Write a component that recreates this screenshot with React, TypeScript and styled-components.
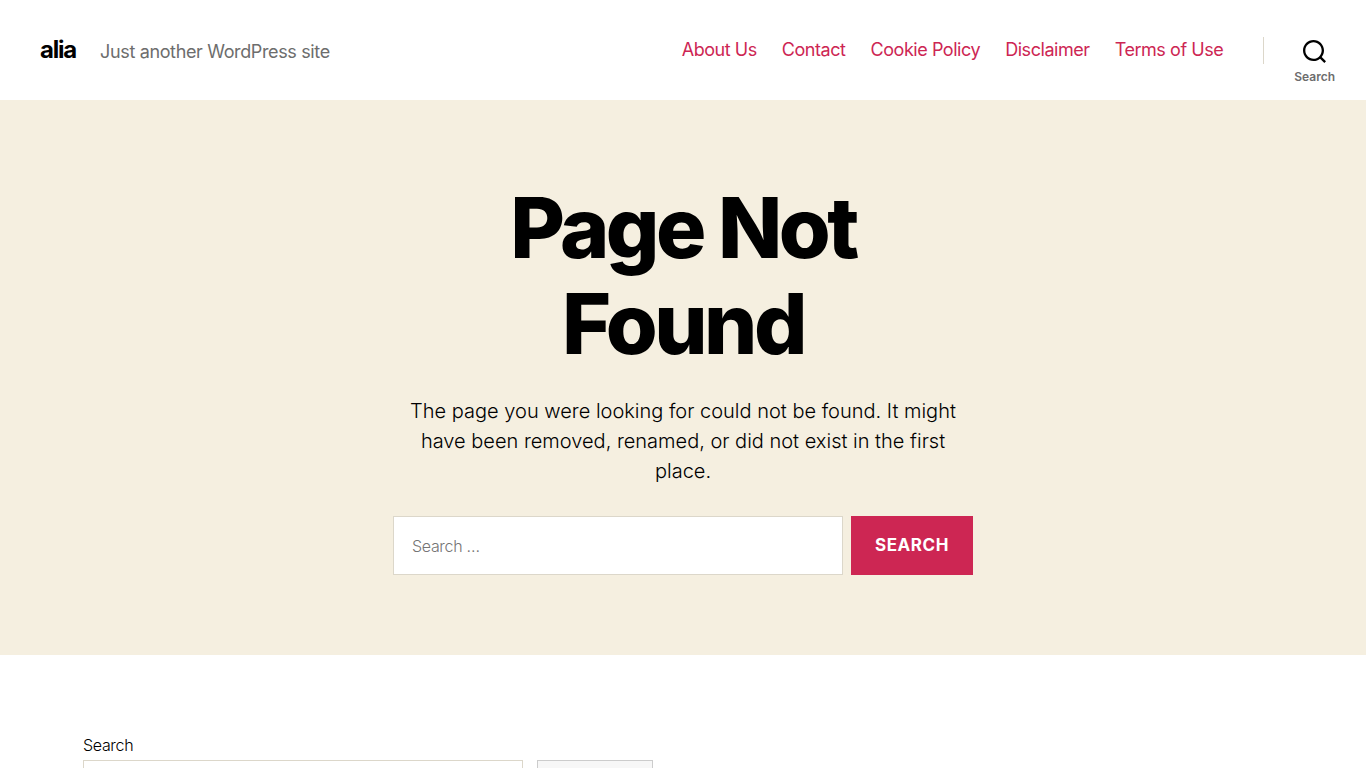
import React from "react";
import styled, { createGlobalStyle } from "styled-components";

const GlobalStyle = createGlobalStyle`
  *, *::before, *::after { box-sizing: border-box; }
  body {
    margin: 0;
    background: #fff;
    color: #000;
    font-family: Inter, "Liberation Sans", sans-serif;
    font-size: 18px;
    letter-spacing: -0.015em;
  }
`;

const Header = styled.header`
  display: flex;
  align-items: stretch;
  justify-content: space-between;
  min-height: 100px;
  background: #fff;
`;

const Branding = styled.div`
  display: flex;
  align-items: baseline;
  gap: 24px;
  padding: 36px 0 0 40px;
`;

const SiteTitle = styled.a`
  color: #000;
  font-size: 24px;
  font-weight: 700;
  line-height: 28px;
  letter-spacing: -0.05em;
  text-decoration: none;
`;

const Tagline = styled.p`
  margin: 0;
  color: #6d6d6d;
  font-size: 18px;
  font-weight: 400;
  line-height: 28px;
  letter-spacing: -0.02em;
`;

const HeaderRight = styled.div`
  display: flex;
  align-items: flex-start;
  padding-top: 37px;
`;

const Menu = styled.ul`
  display: flex;
  gap: 25px;
  margin: 0;
  padding: 0 40px 0 0;
  list-style: none;
`;

const MenuLink = styled.a`
  display: block;
  color: #cd2653;
  font-size: 18px;
  font-weight: 400;
  line-height: 26px;
  letter-spacing: -0.025em;
  text-decoration: none;
`;

const SearchToggle = styled.button`
  display: flex;
  flex-direction: column;
  align-items: center;
  gap: 7px;
  margin: 0;
  padding: 3px 0 0;
  border: 0;
  background: none;
  color: #6d6d6d;
  font: 600 12px/14px Inter, "Liberation Sans", sans-serif;
  cursor: pointer;

  svg { display: block; flex: none; }
`;

const ToggleWrap = styled.div`
  display: flex;
  align-items: flex-start;
  padding: 0 31px 0 30px;
  border-left: 1px solid #dcd7ca;
  height: 27px;
`;

const Hero = styled.main`
  padding: 80px 20px;
  background: #f5efe0;
`;

const HeroInner = styled.div`
  max-width: 580px;
  margin: 0 auto;
  text-align: center;
`;

const Title = styled.h1`
  margin: 0 0 24px;
  font-size: 84px;
  font-weight: 800;
  line-height: 96px;
  letter-spacing: -0.0415em;
`;

const Intro = styled.p`
  margin: 0 0 30px;
  font-size: 20px;
  font-weight: 300;
  line-height: 30px;
  letter-spacing: normal;
`;

const SearchForm = styled.form`
  display: flex;
  gap: 8px;
`;

const Field = styled.input`
  flex: 1;
  min-width: 0;
  height: 59px;
  margin: 0;
  padding: 0 18px;
  border: 1px solid #dcd7ca;
  border-radius: 0;
  background: #fff;
  color: #000;
  font: 300 16px Inter, "Liberation Sans", sans-serif;
  letter-spacing: -0.02em;

  &::placeholder { color: #757575; }
`;

const Submit = styled.button`
  padding: 0 24px 2px;
  border: 0;
  background: #cd2653;
  color: #fff;
  font: 700 17px Inter, "Liberation Sans", sans-serif;
  letter-spacing: 0.0333em;
  text-transform: uppercase;
  cursor: pointer;
`;

const Footer = styled.footer`
  display: grid;
  grid-template-columns: 1fr 1fr;
  gap: 60px;
  max-width: 1200px;
  margin: 0 auto;
  padding: 80px 0;
`;

const Widget = styled.form`
  display: block;
`;

const WidgetLabel = styled.label`
  display: block;
  font-size: 16px;
  font-weight: 300;
  line-height: 20px;
  letter-spacing: -0.02em;
  margin-bottom: 5px;
`;

const WidgetRow = styled.div`
  display: flex;
  gap: 14px;
`;

const WidgetButton = styled.button`
  width: 116px;
  border: 1px solid #ccc;
  background: #f7f7f7;
  color: #32373c;
  font: 400 18px Inter, "Liberation Sans", sans-serif;
  cursor: pointer;
`;

const links = ["About Us", "Contact", "Cookie Policy", "Disclaimer", "Terms of Use"];

const SearchIcon = () => (
  <svg width="23" height="23" viewBox="0 0 23 23" aria-hidden="true">
    <path
      fill="#000"
      d="M38.710696,48.0601792 L43,52.3494831 L41.3494831,54 L37.0601792,49.710696 C35.2632422,51.1481185 32.9839107,52.0076499 30.5038249,52.0076499 C24.7027226,52.0076499 20,47.3049272 20,41.5038249 C20,35.7027226 24.7027226,31 30.5038249,31 C36.3049272,31 41.0076499,35.7027226 41.0076499,41.5038249 C41.0076499,43.9839107 40.1481185,46.2632422 38.710696,48.0601792 Z M36.3875844,47.1716785 C37.8030221,45.7026647 38.6734666,43.7048964 38.6734666,41.5038249 C38.6734666,36.9918565 35.0157934,33.3341833 30.5038249,33.3341833 C25.9918565,33.3341833 22.3341833,36.9918565 22.3341833,41.5038249 C22.3341833,46.0157934 25.9918565,49.6734666 30.5038249,49.6734666 C32.7048964,49.6734666 34.7026647,48.8030221 36.1716785,47.3875844 C36.2023931,47.347638 36.2360451,47.3092237 36.2726343,47.2726343 C36.3092237,47.2360451 36.347638,47.2023931 36.3875844,47.1716785 Z"
      transform="translate(-20 -31)"
    />
  </svg>
);

export default function App() {
  const stop = (event: React.FormEvent) => event.preventDefault();
  return (
    <>
      <GlobalStyle />
      <Header>
        <Branding>
          <SiteTitle href="#">alia</SiteTitle>
          <Tagline>Just another WordPress site</Tagline>
        </Branding>
        <HeaderRight>
          <nav aria-label="Horizontal">
            <Menu>
              {links.map((label) => (
                <li key={label}>
                  <MenuLink href="#">{label}</MenuLink>
                </li>
              ))}
            </Menu>
          </nav>
          <ToggleWrap>
            <SearchToggle type="button">
              <SearchIcon />
              Search
            </SearchToggle>
          </ToggleWrap>
        </HeaderRight>
      </Header>
      <Hero>
        <HeroInner>
          <Title>Page Not Found</Title>
          <Intro>
            The page you were looking for could not be found. It might have been removed, renamed, or
            did not exist in the first place.
          </Intro>
          <SearchForm role="search" onSubmit={stop}>
            <Field type="search" placeholder="Search …" aria-label="Search for" />
            <Submit type="submit">Search</Submit>
          </SearchForm>
        </HeroInner>
      </Hero>
      <Footer>
        <Widget role="search" onSubmit={stop}>
          <WidgetLabel htmlFor="footer-search">Search</WidgetLabel>
          <WidgetRow>
            <Field id="footer-search" type="search" />
            <WidgetButton type="submit">Search</WidgetButton>
          </WidgetRow>
        </Widget>
      </Footer>
    </>
  );
}
